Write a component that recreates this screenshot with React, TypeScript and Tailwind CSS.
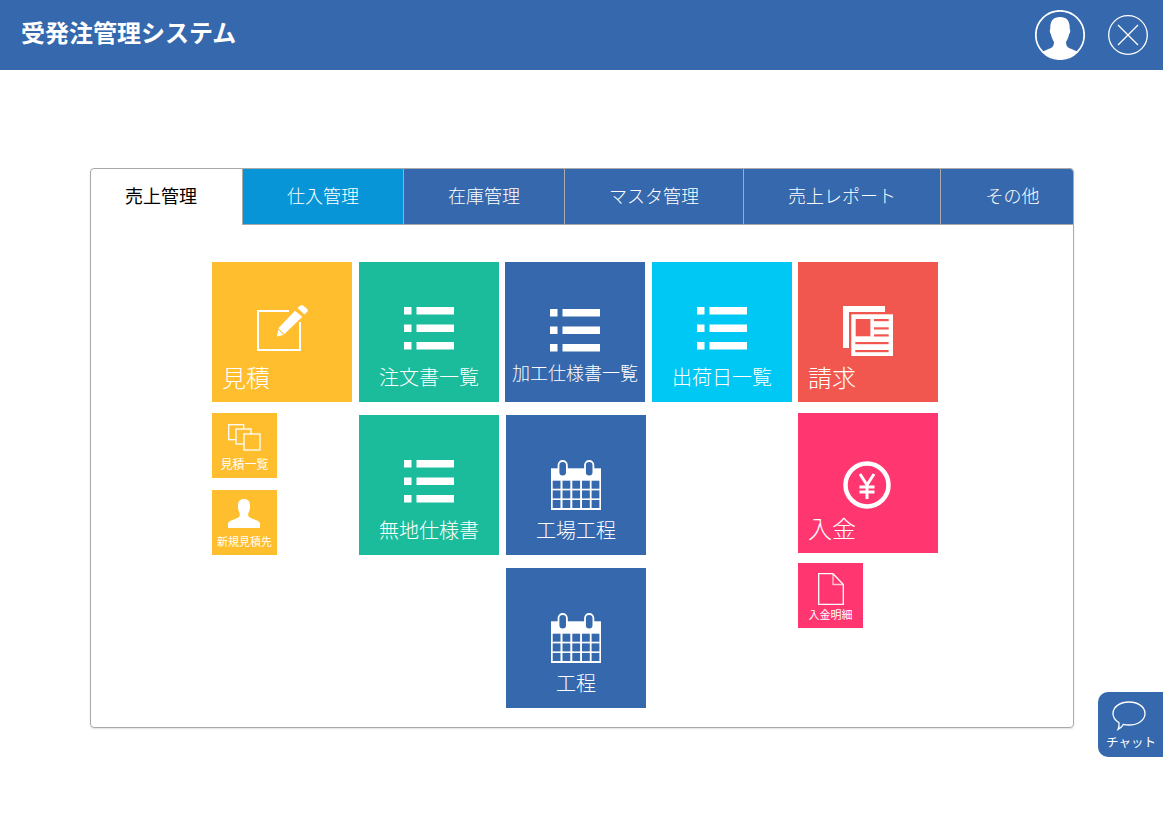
import React from "react";

const FONT = { fontFamily: '"Noto Sans CJK JP", "Liberation Sans", sans-serif' };

const BLUE = "#3568ac";

function ListIcon() {
  return (
    <svg width="50" height="43" viewBox="0 0 50 43" fill="#fff">
      {[0, 17.5, 35].map((y) => (
        <g key={y}>
          <rect x="0" y={y} width="7.5" height="7.5" />
          <rect x="12.5" y={y} width="37.5" height="7.5" />
        </g>
      ))}
    </svg>
  );
}

function EditIcon() {
  return (
    <svg width="52" height="47" viewBox="0 0 52 47" fill="none" className="ml-[2px]">
      <path d="M32 6H1V45H43V17" stroke="#fff" strokeWidth="2" />
      <path d="M19.7 31.5L21.3 24.5L26.5 30Z" fill="#fff" />
      <path d="M21.3 23.3L38 5.7L45.3 11.7L27.3 29.3Z" fill="#fff" />
      <path d="M40.5 3L43 .8C44 0 45.2 0 46 .6L50 3.8C51 4.8 51 6 50.3 6.8L47.3 9.5Z" fill="#fff" />
    </svg>
  );
}

function CalendarIcon() {
  const xs = [1.7, 11.5, 21.3, 31, 40.6];
  const ys = [20.7, 30.4, 40];
  return (
    <svg width="50" height="50" viewBox="0 0 50 50">
      <rect x="0" y="8.3" width="50" height="41.7" fill="#fff" />
      {ys.map((y) =>
        xs.map((x) => <rect key={`${x}-${y}`} x={x} y={y} width="7.8" height="8" fill={BLUE} />)
      )}
      {[7.5, 34].map((x) => (
        <rect key={x} x={x} y="1" width="8.4" height="15.5" rx="4.2" fill={BLUE} stroke="#fff" strokeWidth="1.8" />
      ))}
    </svg>
  );
}

function NewsIcon() {
  const c = "#f2574f";
  return (
    <svg width="50" height="50" viewBox="0 0 50 50">
      <path d="M0 0H42V6H6V42H0Z" fill="#fff" />
      <rect x="8.3" y="8.3" width="41.7" height="41.7" fill="#fff" />
      <rect x="12.7" y="13" width="14.7" height="17.3" fill={c} />
      {[13, 21.3, 28.3].map((y) => (
        <rect key={y} x="31" y={y} width="14.7" height="2.2" fill={c} />
      ))}
      {[36, 44].map((y) => (
        <rect key={y} x="12.3" y={y} width="33.3" height="2.2" fill={c} />
      ))}
    </svg>
  );
}

function YenIcon() {
  return (
    <svg width="48" height="48" viewBox="0 0 48 48" fill="none" stroke="#fff" className="mr-[2px]">
      <circle cx="24" cy="24" r="21.5" strokeWidth="4.5" />
      <path d="M17 13L24 24L31 13M24 24V38M16.5 26H31.5M16.5 31H31.5" strokeWidth="3" />
    </svg>
  );
}

function CopyIcon() {
  const y = "#ffbe2d";
  return (
    <svg width="33" height="27" viewBox="0 0 33 27" stroke="#fff" strokeWidth="1.3" fill={y}>
      <rect x=".7" y=".7" width="15" height="15" />
      <rect x="8" y="5" width="15" height="15" />
      <rect x="16" y="10" width="16" height="16" />
    </svg>
  );
}

function PersonSmall() {
  return (
    <svg width="32" height="29" viewBox="0 0 32 29" fill="#fff" className="mr-[1px]">
      <path d="M16 0C20.5 0 22.2 3 22 7.5C22 9.5 21.8 11.5 20.6 13.6C20 15 20 17 21 18C23.5 20 30 21 32 24V29H0V24C2 21 8.5 20 11 18C12 17 12 15 11.4 13.6C10.2 11.5 10 9.5 10 7.5C9.8 3 11.5 0 16 0Z" />
    </svg>
  );
}

function DocIcon() {
  return (
    <svg width="26" height="32" viewBox="0 0 26 32" fill="none" stroke="#fff" strokeWidth="1.3">
      <path d="M.7.7H15L25.3 11.5V31.3H.7Z" />
      <path d="M15 .7V11.5H25.3" strokeOpacity=".7" />
    </svg>
  );
}

function Tile({ bg, label, icon, iconClass, labelClass }: { bg: string; label: string; icon: React.ReactNode; iconClass: string; labelClass: string }) {
  return (
    <div className={`flex h-[140px] w-[140px] flex-col items-center text-white ${bg}`}>
      <div className={`flex h-[50px] items-center justify-center ${iconClass}`}>{icon}</div>
      <div className={`h-[30px] whitespace-nowrap font-light leading-[30px] ${labelClass}`}>{label}</div>
    </div>
  );
}

function Small({ bg, label, icon, iconClass, labelClass }: { bg: string; label: string; icon: React.ReactNode; iconClass: string; labelClass: string }) {
  return (
    <div className={`flex h-[65px] w-[65px] flex-col items-center text-white ${bg}`}>
      <div className={`flex items-center justify-center ${iconClass}`}>{icon}</div>
      <div className={`h-[14px] whitespace-nowrap leading-[14px] ${labelClass}`}>{label}</div>
    </div>
  );
}

const tabs = [
  { t: "仕入管理", c: "w-[161px] bg-[#0895d8]" },
  { t: "在庫管理", c: "w-[161px] bg-[#3568ac]" },
  { t: "マスタ管理", c: "w-[179px] bg-[#3568ac]" },
  { t: "売上レポート", c: "w-[197px] bg-[#3568ac]" },
  { t: "その他", c: "w-[133px] bg-[#3568ac] pl-[11px] rounded-tr-[4px]" },
];

export default function App() {
  return (
    <div className="relative h-[816px] overflow-hidden bg-white" style={FONT}>
      <header className="flex h-[70px] items-center bg-[#3568ac] pl-[21px] pr-[15px]">
        <h1 className="flex-1 pb-[6px] text-[24px] font-bold leading-[32px] text-white">受発注管理システム</h1>
        <svg width="50" height="50" viewBox="0 0 50 50">
          <defs>
            <clipPath id="av">
              <circle cx="25" cy="25" r="24" />
            </clipPath>
          </defs>
          <g clipPath="url(#av)">
            <path d="M25 7C32 7 35 11 34.7 19C35.6 20 35.3 23 34 24.5C33.5 28 32 30 31 32C31 35 32 37 34 38C38 40 43 41 46 44V50H4V44C7 41 12 40 16 38C18 37 19 35 19 32C18 30 16.5 28 16 24.5C14.7 23 14.4 20 15.3 19C15 11 18 7 25 7Z" fill="#fff" />
          </g>
          <circle cx="25" cy="25" r="24.2" fill="none" stroke="#fff" strokeWidth="1.7" />
        </svg>
        <svg width="40" height="40" viewBox="0 0 40 40" className="ml-[23px]" fill="none" stroke="#fff" strokeWidth="1.3">
          <circle cx="20" cy="20" r="19.3" />
          <path d="M10 10L30 30M30 10L10 30" />
        </svg>
      </header>

      <main className="ml-[90px] mt-[98px] flex h-[560px] w-[984px] flex-col rounded-[4px] border border-[#aaaaaa] shadow-[0_1px_2px_rgba(0,0,0,0.12)]">
        <nav className="flex h-[56px] text-[18px] font-light leading-[52px]">
          <div className="h-[56px] w-[151px] pl-[34px] font-normal text-black">売上管理</div>
          {tabs.map((tab) => (
            <div key={tab.t} className={`-mt-px h-[57px] border-b border-l border-t border-[#aaaaaa] text-center text-white ${tab.c}`}>
              {tab.t}
            </div>
          ))}
        </nav>

        <section className="ml-[121px] mt-[37px] flex items-start">
          <div className="flex flex-col">
            <Tile bg="bg-[#ffbe2d]" label="見積" icon={<EditIcon />} iconClass="mt-[41px]" labelClass="mt-[9px] self-start pl-[10px] text-[24px]" />
            <div className="mt-[11px]">
              <Small bg="bg-[#ffbe2d]" label="見積一覧" icon={<CopyIcon />} iconClass="mt-[11px] h-[27px]" labelClass="mt-[6px] text-[12px]" />
            </div>
            <div className="mt-[12px]">
              <Small bg="bg-[#ffbe2d]" label="新規見積先" icon={<PersonSmall />} iconClass="mt-[9px] h-[29px]" labelClass="mt-[6px] text-[11px]" />
            </div>
          </div>

          <div className="ml-[7px] flex flex-col gap-[13px]">
            <Tile bg="bg-[#1bbc9b]" label="注文書一覧" icon={<ListIcon />} iconClass="mt-[41px]" labelClass="mt-[9px] text-[20px]" />
            <Tile bg="bg-[#1bbc9b]" label="無地仕様書" icon={<ListIcon />} iconClass="mt-[41px]" labelClass="mt-[9px] text-[20px]" />
          </div>

          <div className="ml-[6px] flex flex-col">
            <Tile bg="bg-[#3568ac]" label="加工仕様書一覧" icon={<ListIcon />} iconClass="mt-[43px]" labelClass="mt-[2px] text-[18px]" />
            <div className="ml-px mt-[13px] flex flex-col gap-[13px]">
              <Tile bg="bg-[#3568ac]" label="工場工程" icon={<CalendarIcon />} iconClass="mt-[45px]" labelClass="mt-[5px] text-[20px]" />
              <Tile bg="bg-[#3568ac]" label="工程" icon={<CalendarIcon />} iconClass="mt-[45px]" labelClass="mt-[5px] text-[20px]" />
            </div>
          </div>

          <div className="ml-[6px]">
            <Tile bg="bg-[#00c8f4]" label="出荷日一覧" icon={<ListIcon />} iconClass="mt-[41px]" labelClass="mt-[9px] text-[20px]" />
          </div>

          <div className="ml-[6px] flex flex-col">
            <Tile bg="bg-[#f2574f]" label="請求" icon={<NewsIcon />} iconClass="mt-[44px]" labelClass="mt-[6px] self-start pl-[10px] text-[24px]" />
            <div className="mt-[11px]">
              <Tile bg="bg-[#ff3670]" label="入金" icon={<YenIcon />} iconClass="mt-[47px]" labelClass="mt-[3px] self-start pl-[10px] text-[24px]" />
            </div>
            <div className="mt-[10px]">
              <Small bg="bg-[#ff3670]" label="入金明細" icon={<DocIcon />} iconClass="mt-[10px] h-[32px]" labelClass="mt-[2px] text-[11px]" />
            </div>
          </div>
        </section>
      </main>

      <div className="absolute left-[1098px] top-[692px] flex h-[65px] w-[65px] flex-col items-center rounded-l-[10px] bg-[#3568ac] text-white">
        <svg width="34" height="30" viewBox="0 0 34 30" className="ml-[-3px] mt-[9px]" fill="none" stroke="#fff" strokeWidth="1.3">
          <path d="M17 1C25.5 1 33 5.5 33 12.5C33 19 26 24 17 24C15 24 13 23.8 11.5 23.3C10 25.5 8 27.5 6 28.5C7 26.5 7.3 24.5 7 21.8C3.5 19.6 1 16.5 1 12.5C1 5.5 8.5 1 17 1Z" />
        </svg>
        <div className="ml-[1px] mt-[2px] whitespace-nowrap text-[12.5px] leading-[18px]">チャット</div>
      </div>
    </div>
  );
}
